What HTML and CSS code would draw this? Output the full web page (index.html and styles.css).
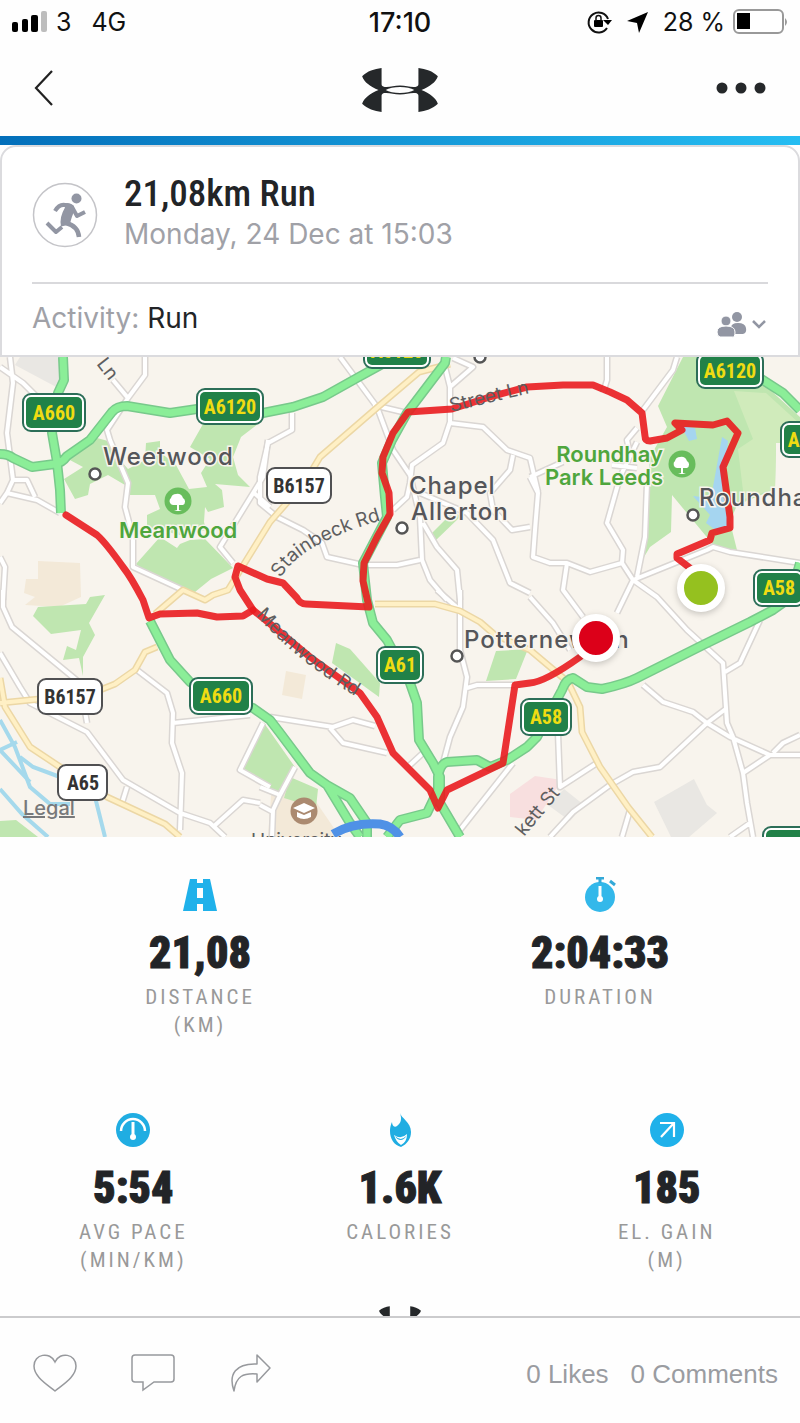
FILE: index.html
```html
<!DOCTYPE html>
<html lang="en">
<head>
<meta charset="utf-8">
<meta name="viewport" content="width=device-width, initial-scale=1">
<title>21,08km Run</title>
<link rel="stylesheet" href="styles.css">
</head>
<body>
<svg class="defs" aria-hidden="true">
  <symbol id="logo" viewBox="0 0 74 43">
    <path d="M19 0C12 1 5 3 0 8C2 14 8 18 16 21.500C8 25 2 29 0 35C5 40 12 42 19 43V27Q19 25 22 24.500C27 24 31 26 37 26C43 26 47 24 52 24.500Q55 25 55 27V43C62 42 69 40 74 35C72 29 66 25 58 21.500C66 18 72 14 74 8C69 3 62 1 55 0V16Q55 18 52 18.500C47 19 43 17 37 17C31 17 27 19 22 18.500Q19 18 19 16ZM23 21.500C29 17.500 45 17.500 51 21.500C45 25.500 29 25.500 23 21.500Z" fill="#25282a" fill-rule="evenodd"/>
  </symbol>
</svg>
<div class="app">
  <div class="status">
    <div class="status-side">
      <svg width="36" height="24" viewBox="0 0 36 24" aria-hidden="true"><rect y="12" width="6" height="10" rx="2"/><rect x="10" y="9" width="6" height="13" rx="2"/><rect x="19" y="5" width="7" height="17" rx="2"/><rect x="29" y="1" width="6" height="21" rx="2" fill="#bdbdbd"/></svg>
      <span>3</span><span class="network">4G</span>
    </div>
    <span class="clock">17:10</span>
    <div class="status-side status-right">
      <svg width="26" height="24" viewBox="0 0 26 24" aria-hidden="true"><path d="M20 18A10 10 0 1 1 21 9" fill="none" stroke="#111" stroke-width="2"/><path d="M16 10h9l-4 5z"/><rect x="7" y="10" width="9" height="7" rx="1"/><path d="M9 11V8a2.500 2.500 0 0 1 5 0v3" fill="none" stroke="#111" stroke-width="1.500"/></svg>
      <svg class="locate" width="22" height="22" viewBox="0 0 22 22" aria-hidden="true"><path d="M21 1L0 10l10 2 2 10z"/></svg>
      <span>28 %</span>
      <svg width="55" height="26" viewBox="0 0 55 26" aria-hidden="true"><rect x="1" y="1" width="49" height="23" rx="5" fill="#fff" stroke="#999" stroke-width="2"/><rect x="4" y="4" width="13" height="16"/><path d="M52 9q4 4 0 8z" fill="#999"/></svg>
    </div>
  </div>
  <header class="nav">
    <button class="icon-btn" aria-label="Back"><svg width="20" height="38" viewBox="0 0 20 38"><path d="M18 2L2 19l16 17" fill="none" stroke="#222" stroke-width="2.200"/></svg></button>
    <svg class="brand" role="img" aria-label="Under Armour"><use href="#logo"/></svg>
    <button class="icon-btn" aria-label="More"><svg width="50" height="12" viewBox="0 0 50 12" fill="#25282a"><circle cx="6" cy="6" r="5.500"/><circle cx="25" cy="6" r="5.500"/><circle cx="44" cy="6" r="5.500"/></svg></button>
  </header>
  <div class="accent"></div>
  <main class="content">
    <section class="card">
      <div class="summary">
        <svg class="avatar" width="66" height="66" viewBox="0 0 66 66" aria-hidden="true"><circle cx="33" cy="33" r="31.500" fill="#fff" stroke="#c4c4c8" stroke-width="1.500"/><circle cx="44.500" cy="16.500" r="5" fill="#9296a3"/><g fill="none" stroke="#9296a3" stroke-width="4" stroke-linejoin="round"><path d="M23 29q4-7 10-6l7 2 5 9 8-4"/><path d="M34 41q12 3 13 14" stroke-width="4.500"/><path d="M15 41l9 9 6-5"/></g><path d="M31 21.500q8-2 11 3c1 6-3 10-4 18l-9 2q-2-9 4-19z" fill="#9296a3"/></svg>
        <div><h1>21,08km Run</h1><p class="date">Monday, 24 Dec at 15:03</p></div>
      </div>
      <div class="activity">
        <p><span class="muted">Activity:</span> Run</p>
        <button class="icon-btn" aria-label="Privacy"><svg width="51" height="28" viewBox="0 0 51 28"><g fill="#9296a3"><circle cx="20" cy="7" r="5"/><path d="M14 18q0-5 7-5t8 5-3 6H17q-3-2-3-6z"/><circle cx="9" cy="11" r="5" stroke="#fff"/><path d="M0 22q0-6 9-6t9 6-3 5H3q-3-1-3-5z" stroke="#fff"/></g><path d="M36 11l6 6 6-6" fill="none" stroke="#9296a3" stroke-width="2.500"/></svg></button>
      </div>
    </section>
    <svg class="map" viewBox="0 0 800 480" role="img" aria-label="Route map">
      <rect width="800" height="480" fill="#f8f4ed"/>
      <g fill="#e9e7e3"><path d="M15 8l45 24V0H20z"/><path d="M654 445l40-23 13 26 10 8-28 24h-18z"/><path d="M548 448l16-16 20 16-14 16z"/></g>
      <g fill="#f3e9d8"><path d="M38 204l42 2 1 34-22 10-34-2 10-8-11-4 2-14h12z"/><path d="M286 314l20 4-4 24-20-4z"/><path d="M272 426l38 10 30 44h-72z"/></g>
      <path d="M510 437l25-18 27 4-26 40-26-3z" fill="#f8dfdf"/>
      <g fill="#bfe6b0">
        <path d="M97 81L108 84L113 95L128 112L145 103L146 86L160 84L160 95L176 108L189 132L207 130L201 116L210 102L190 90L203 67L235 66L263 63L241 80L233 100L238 118L250 130L215 127L222 133L224 150L208 155L205 150L204 165L206 173L180 178L160 173L147 170L147 158L160 152L155 138L130 138L125 128L108 118L90 127L88 138L75 142L64 122L83 110L68 102Z"/>
        <path d="M160 180L177 191L180 187L190 183L205 182L233 211L211 222L195 235L160 226L136 207Z"/>
        <path d="M38 250L86 247L90 240L105 238L89 266L95 278L83 300L83 319L79 301L63 303L67 289L76 293L81 273L51 277L33 259Z"/>
        <path d="M336 286l14 6 30 34-1 14-47-34z"/>
        <path d="M430 178L453 155L461 159L434 185Z"/>
        <path d="M486 324l10-30 32-2-12 30z"/>
        <path d="M683 0H733L745 10L800 60V85L776 86L775 132L737 148L730 165L737 193L715 190L672 138L671 175L650 190L638 210L645 160L650 100L667 70L658 49Z"/>
        <path d="M264 366L297 413L280 438L242 413ZM290 420L318 432L316 451L284 441Z"/>
        <path d="M0 464l16-1 22 17H0z"/>
      </g>
      <path d="M734 34l32 2 34 31v18l-24 1-1 46-31 10-6-50 15-10z" fill="#d0ebbb"/>
      <g fill="#a5d5f0"><path d="M681 69l14 2 2 11-8 2z"/><path d="M722 80l6 4-6 52 8 36-12 3-12-9 4-8-17-19 18 2z"/></g>
      <g class="stream"><path d="M0 363L15 390L30 430L50 447L70 447M20 400L33 410L60 420M95 440L105 480"/><path d="M0 393l17-8M0 393L30 425"/><path d="M0 432l22 25 26 23"/></g>
      <g class="road-case">
        <path id="m1" d="M10 0L13 26L7 76L13 123L7 136L0 146M0 10L23 26L43 46M13 123H27L35 140M7 136L37 143L60 156M145 0V18L128 41L107 73L110 83L128 126L125 150L133 180V210L183 233M128 41L113 23M268 83L263 120L220 190L233 206M253 135L270 150M0 200L5 210L3 243"/>
        <path id="m2" d="M3 233V250L12 270L80 326L87 366M0 296L20 330L30 346L87 375L123 423L180 456L210 466L225 480M127 430L122 446M137 313L167 336L173 356L172 386L182 416L180 473M173 366L250 358M263 366L240 413L270 430M213 470L243 443L260 446"/>
        <path id="m3" d="M340 0L377 50L393 93L410 118M373 48L407 56M292 56V73L268 86L260 120V146L277 160L303 173L322 186L327 200L363 208H397L420 203M445 10L450 30V65L443 86L412 108L410 126L407 140L393 153M450 30L473 10L453 1M450 66L483 70L507 93L530 101L538 135M513 98L510 113L490 136L493 153L512 173L530 170M410 118L420 160L422 203L430 223L447 243M420 136L467 156L493 183L510 226L530 236M423 166L437 190L457 213L460 243"/>
        <path id="m4" d="M460 233V293L467 320L463 350L450 380L443 406M467 331L477 328H515M437 233L460 253M270 360L333 370L353 363L375 369M330 371L343 386L387 396M410 408L423 396M460 473L513 406M260 430L280 438L295 410M280 438L273 453L272 480M260 448L273 455"/>
        <path id="m5" d="M607 0V23L603 36M677 0L673 13L643 53M637 71L627 83L630 98M530 120L563 105M612 108L637 111M647 126L645 180L637 220M637 85L620 120L607 166L623 193L622 206L633 223M530 120L538 136L535 173L533 200L550 206H567L590 215L622 206M567 206L563 233L583 260M633 223L707 193L713 190L730 195L800 206M633 223L617 256M633 223L657 240L687 273L723 306L727 366L733 380L743 416L747 446L753 480M760 263L740 306L725 315M643 328L663 345L693 355L707 366L730 380L770 398H800M727 351L707 366L660 410L633 415L610 428L573 455L550 480M773 396L783 386L800 378M770 398L743 416M558 376L560 430L597 406M630 453L622 480M730 480L750 466M530 240L553 266L570 293"/>
      </g>
      <g class="road"><use href="#m1"/><use href="#m2"/><use href="#m3"/><use href="#m4"/><use href="#m5"/></g>
      <g class="yellow"><path id="y1" d="M450 7L419 15L379 49L320 100L305 125L270 165L228 233L213 238L205 243L183 233L155 257M157 290L145 295L135 313L115 327L90 337L0 346M0 321L5 350L30 390L57 408L107 440L165 467L180 480M375 247H435L460 254L480 265L495 278L530 293L568 325L580 350L582 375L600 410L628 450L652 480"/></g>
      <g class="yellow-in"><use href="#y1"/></g>
      <g class="green-case">
        <path id="g1" d="M63 0L64 23L58 36L52 76L57 105L60 133L61 156M0 97Q8 97 13 101L32 110L55 107Q62 106 67 99L90 83L112 55Q117 49 127 49L170 56L197 52L263 56L293 50L323 40L357 21L395 0"/>
        <path id="g2" d="M446 0L445 6L407 56L392 83L382 106L385 140L387 160L363 206L367 243L373 266L387 283L410 326L417 346L419 383L433 406L440 420V446L460 480"/>
        <path id="g3" d="M800 206L790 241L773 253L750 265L703 288L637 321Q625 327 602 332L587 330L573 321Q566 322 562 333L537 380L527 390L507 403L490 410L477 403L447 405Q440 407 438 420V433L427 456L400 463L387 480"/>
        <path id="g4" d="M150 264L170 303L190 325L220 340L253 351L270 363L280 376L310 416L327 428L350 466L360 480M327 428L350 441L367 466V480"/>
        <path id="g5" d="M755 18L783 36L800 53"/>
      </g>
      <g class="green"><use href="#g1"/><use href="#g2"/><use href="#g3"/><use href="#g4"/><use href="#g5"/></g>
      <path d="M333 477q20-12 47-10 13 2 20 13" fill="none" stroke="#4f91e6" stroke-width="9"/>
      <path class="route" d="M66 158L97 178Q106 186 123 210Q131 220 143 243L149 261L160 257L197 256L217 260L243 259L253 253L240 233L235 220L238 209L267 222L283 226L297 241Q300 247 306 247L369 250L363 224L364 206L377 180L390 157L389 136L382 116L383 100L393 76L408 55L452 52L493 39L527 30L563 28H593L610 35L627 43L642 56L645 79Q645 84 650 84L667 81L682 73L675 66L713 68L727 64L738 76L723 110L730 160V171L712 176L710 183L677 197V201L690 211"/>
      <path class="route" d="M253 253L263 261L310 300L360 336L377 360L393 396L430 433L438 451L447 433L503 406L515 328L530 326Q545 325 580 300"/>
      <g class="place">
        <text x="103" y="108">Weetwood</text><text x="409" y="137">Chapel</text><text x="411" y="163">Allerton</text><text x="699" y="149">Roundhay</text><text x="464" y="291">Potternewton</text>
      </g>
      <g class="park"><text x="119" y="181">Meanwood</text><text x="663" y="105" text-anchor="end">Roundhay</text><text x="663" y="128" text-anchor="end">Park Leeds</text></g>
      <g fill="#fff" stroke="#555" stroke-width="2.500"><circle cx="95" cy="117" r="5.500"/><circle cx="402" cy="171" r="5.500"/><circle cx="693" cy="158" r="5.500"/><circle cx="457" cy="299" r="5.500"/><circle cx="480" cy="0" r="5.500"/></g>
      <g id="tree"><circle cx="178" cy="144" r="13.500" fill="#68bd5c"/><path d="M177 153v-5h-4a4 4 0 0 1-2-7q1-4 5-4 5-1 7 4a4 4 0 0 1 0 7h-4v5l3 1h-8z" fill="#fff"/></g>
      <use href="#tree" x="504" y="-37"/>
      <g><circle cx="304" cy="454" r="13.500" fill="#ab8a70"/><path d="M293 451l11-5 11 5-11 5zM297 455l7 3 7-3v5q-7 4-14 0z" fill="#fff"/></g>
      <path id="p-stain" d="M281 221Q300 184 400 158" fill="none"/><path id="p-mean" d="M256 258Q300 309 374 350" fill="none"/><path id="p-street" d="M451 55L560 29" fill="none"/>
      <g class="street"><text><textPath href="#p-stain">Stainbeck Rd</textPath></text><text><textPath href="#p-mean">Meanwood Rd</textPath></text><text><textPath href="#p-street">Street Ln</textPath></text><text transform="translate(96 7) rotate(52)">Ln</text><text transform="translate(524 480) rotate(-50)">kett St</text><text x="251" y="490">University</text></g>
      <text class="legal" x="23" y="458">Legal</text>
      <g class="shield">
        <g transform="translate(23 37)"><rect width="62" height="37" rx="8"/><rect class="in" x="3" y="3" width="56" height="31" rx="5"/><text x="31" y="26">A660</text></g>
        <g transform="translate(197 32)"><rect width="66" height="35" rx="8"/><rect class="in" x="3" y="3" width="60" height="29" rx="5"/><text x="33" y="25">A6120</text></g>
        <g transform="translate(364 -24)"><rect width="66" height="35" rx="8"/><rect class="in" x="3" y="3" width="60" height="29" rx="5"/><text x="33" y="25">A6120</text></g>
        <g transform="translate(697 -4)"><rect width="66" height="35" rx="8"/><rect class="in" x="3" y="3" width="60" height="29" rx="5"/><text x="33" y="25">A6120</text></g>
        <g transform="translate(781 65)"><rect width="66" height="35" rx="8"/><rect class="in" x="3" y="3" width="60" height="29" rx="5"/><text x="33" y="25">A6120</text></g>
        <g transform="translate(377 290)"><rect width="46" height="36" rx="8"/><rect class="in" x="3" y="3" width="40" height="30" rx="5"/><text x="23" y="25">A61</text></g>
        <g transform="translate(190 321)"><rect width="62" height="36" rx="8"/><rect class="in" x="3" y="3" width="56" height="30" rx="5"/><text x="31" y="25">A660</text></g>
        <g transform="translate(521 342)"><rect width="50" height="36" rx="8"/><rect class="in" x="3" y="3" width="44" height="30" rx="5"/><text x="25" y="25">A58</text></g>
        <g transform="translate(754 213)"><rect width="50" height="36" rx="8"/><rect class="in" x="3" y="3" width="44" height="30" rx="5"/><text x="25" y="25">A58</text></g>
        <g transform="translate(763 470)"><rect width="66" height="36" rx="8"/><rect class="in" x="3" y="3" width="60" height="30" rx="5"/></g>
      </g>
      <g class="plate">
        <g transform="translate(267 111)"><rect width="64" height="35" rx="8"/><text x="32" y="25">B6157</text></g>
        <g transform="translate(38 322)"><rect width="64" height="35" rx="8"/><text x="32" y="25">B6157</text></g>
        <g transform="translate(58 408)"><rect width="49" height="35" rx="8"/><text x="25" y="25">A65</text></g>
      </g>
      <g class="pin"><circle cx="701" cy="231" r="20.500" fill="#95c11f"/><circle cx="596" cy="281" r="20.500" fill="#dc0019"/></g>
    </svg>
    <section class="stats stats-two">
      <div class="stat"><svg width="34" height="32" viewBox="0 0 34 32" aria-hidden="true"><path d="M7 0h7v4h6V0h7l7 32H20v-7h-6v7H0zM14 9v10h6V9z" fill="#1fb1ea" fill-rule="evenodd"/></svg><strong>21,08</strong><span>DISTANCE<br>(KM)</span></div>
      <div class="stat"><svg width="34" height="36" viewBox="0 0 34 36" aria-hidden="true"><circle cx="17" cy="20" r="15" fill="#33b8ea"/><path d="M13 1h8M17 1v5M27 4l5 4" fill="none" stroke="#33a9d8" stroke-width="3"/><path d="M17 9v14" stroke="#fff" stroke-width="3"/><circle cx="17" cy="22" r="3" fill="#fff"/></svg><strong>2:04:33</strong><span>DURATION</span></div>
    </section>
    <section class="stats stats-three">
      <div class="stat"><svg width="34" height="34" viewBox="0 0 34 34" aria-hidden="true"><circle cx="17" cy="17" r="17" fill="#20ade2"/><path d="M5 18a12 12 0 0 1 24 0" fill="none" stroke="#fff" stroke-width="2.500"/><path d="M17 9v15" stroke="#fff" stroke-width="3"/><circle cx="17" cy="24" r="3" fill="#fff"/></svg><strong>5:54</strong><span>AVG PACE<br>(MIN/KM)</span></div>
      <div class="stat"><svg width="34" height="34" viewBox="0 0 34 34" aria-hidden="true"><path d="M17 0c1 5 11 9 11 19 0 7-4 12-10 15C11 32 7 26 7 18c0-5 2-9 2-9 0 4 3 6 5 4 4-3 5-7 3-13z" fill="#20ade2"/><path d="M11 22q7 5 13-1 0 8-6 11-5-3-7-10z" fill="#fff"/><path d="M12 23q6 6 11 0-1 3-5 4-4 0-6-4z" fill="#20ade2"/></svg><strong>1.6K</strong><span>CALORIES</span></div>
      <div class="stat"><svg width="34" height="34" viewBox="0 0 34 34" aria-hidden="true"><circle cx="17" cy="17" r="17" fill="#1fb1ea"/><path d="M10 10h14v14M24 10L11 24" fill="none" stroke="#fff" stroke-width="2.200"/></svg><strong>185</strong><span>EL. GAIN<br>(M)</span></div>
    </section>
    <svg class="brand-small" aria-hidden="true"><use href="#logo"/></svg>
  </main>
  <footer class="actions">
    <button class="icon-btn" aria-label="Like"><svg width="44" height="38" viewBox="0 0 44 38"><path d="M22 37C12 29 1 22 1 12 1 0 17-3 22 8 27-3 43 0 43 12c0 10-11 17-21 25z" fill="none" stroke="#97999d" stroke-width="1.500"/></svg></button>
    <button class="icon-btn" aria-label="Comment"><svg width="44" height="38" viewBox="0 0 44 38"><path d="M4 1h36q3 0 3 3v21q0 3-3 3H23L12 36v-8H4q-3 0-3-3V4q0-3 3-3z" fill="none" stroke="#97999d" stroke-width="1.500"/></svg></button>
    <button class="icon-btn" aria-label="Share"><svg width="42" height="38" viewBox="0 0 42 38"><path d="M28 1l13 13-13 14v-8C14 19 7 22 5 37-1 20 7 9 28 10z" fill="none" stroke="#97999d" stroke-width="1.500" stroke-linejoin="round"/></svg></button>
    <p class="counts"><a href="#likes">0 Likes</a><a href="#comments">0 Comments</a></p>
  </footer>
</div>
</body>
</html>
```
FILE: styles.css
```css
* { box-sizing: border-box; }
body { margin: 0; background: #fefefe; color: #222427; font-family: Inter, "Liberation Sans", sans-serif; }
h1, p { margin: 0; }
svg { display: block; flex: none; }
.defs { position: absolute; width: 0; height: 0; }
.icon-btn { padding: 0; border: 0; background: none; cursor: pointer; }
.app { display: flex; flex-direction: column; height: 100vh; }
.status { display: grid; grid-template-columns: 1fr auto 1fr; align-items: center; height: 44px; padding: 0 12px; font-size: 25px; color: #111; }
.status-side { display: flex; align-items: center; gap: 8px; }
.status-right { justify-content: flex-end; }
.network { margin-left: 12px; }
.locate { margin: 0 6px; }
.clock { font-size: 27px; font-weight: 500; }
.nav { display: grid; grid-template-columns: 1fr auto 1fr; align-items: center; height: 92px; padding: 0 34px; }
.nav .icon-btn { justify-self: start; margin-bottom: 4px; }
.nav .icon-btn:last-child { justify-self: end; }
.brand { width: 76px; height: 44px; }
.accent { flex: none; height: 9px; background: linear-gradient(90deg, #036fba, #25bdf2); }
.content { flex: 1; min-height: 0; overflow: hidden auto; scrollbar-width: none; }
.card { border: 2px solid #dbdbde; border-radius: 16px 16px 0 0; padding: 0 30px; background: #fff; }
.summary { display: flex; align-items: center; gap: 26px; height: 137px; border-bottom: 2px solid #d9d9dc; }
h1 { font: 500 37px/40px "Roboto Condensed", "Liberation Sans Narrow", Roboto, sans-serif; }
.date { padding-bottom: 2px; font-size: 28px; line-height: 40px; color: #a0a1a7; }
.activity { display: flex; justify-content: space-between; align-items: center; height: 71px; font-size: 28px; }
.activity p { padding-bottom: 4px; }
.activity .icon-btn { padding-top: 8px; }
.muted { color: #a0a1a7; }
.map { width: 100%; height: auto; overflow: hidden; }
.stream { fill: none; stroke: #a5d9ec; stroke-width: 4; }
.road-case { fill: none; stroke: #dad6d3; stroke-width: 7; stroke-linejoin: round; }
.road { fill: none; stroke: #fff; stroke-width: 4; stroke-linejoin: round; }
.yellow { fill: none; stroke: #ecd7a5; stroke-width: 7; stroke-linejoin: round; }
.yellow-in { fill: none; stroke: #fff0c5; stroke-width: 4; stroke-linejoin: round; }
.green-case { fill: none; stroke: #78c98b; stroke-width: 10; stroke-linejoin: round; }
.green { fill: none; stroke: #8bee98; stroke-width: 7; stroke-linejoin: round; }
.route { fill: none; stroke: #e91c1f; stroke-opacity: .9; stroke-width: 7; stroke-linejoin: round; stroke-linecap: round; }
.place, .park, .street { paint-order: stroke; stroke: #f8f4ed; stroke-width: 3; }
.place { font-size: 24px; font-weight: 500; letter-spacing: 1px; fill: #55565a; }
.park { font-size: 22px; font-weight: 600; fill: #4fa63d; }
.street { font-size: 19px; fill: #5e5e60; stroke: none; }
.legal { font-size: 20px; font-weight: 500; fill: #77787a; text-decoration: underline; }
.shield, .plate { font: 700 20px "Roboto Condensed", "Liberation Sans Narrow", Roboto, sans-serif; text-anchor: middle; }
.shield rect { fill: #fff; stroke: #2c6e58; stroke-width: 2; }
.shield .in { fill: #218148; stroke: none; }
.shield text { fill: #f0dc12; }
.plate rect { fill: #fff; stroke: #505052; stroke-width: 2; }
.plate text { fill: #333; }
.pin { stroke: #fff; stroke-width: 7; filter: drop-shadow(0 2px 3px #0003); }
.stats { display: grid; text-align: center; }
.stats-two { grid-template-columns: 1fr 1fr; padding-top: 40px; min-height: 235px; }
.stats-three { grid-template-columns: repeat(3, 1fr); padding-top: 40px; }
.stat { display: flex; flex-direction: column; align-items: center; }
.stat svg { height: 36px; }
.stat strong { margin-top: 12px; font: 900 44px/56px "Roboto Condensed", "Liberation Sans Narrow", Roboto, sans-serif; -webkit-text-stroke: 1px currentColor; }
.stat span { margin-top: 2px; font: 400 21px/28px "Roboto Condensed", "Liberation Sans Narrow", Roboto, sans-serif; letter-spacing: 3px; color: #999; }
.brand-small { width: 42px; height: 25px; margin: 32px auto; }
.actions { display: flex; align-items: center; gap: 54px; flex: none; height: 107px; padding: 4px 22px 0 33px; border-top: 2px solid #cbcbcd; background: #fefefe; }
.counts { display: flex; gap: 22px; margin-left: auto; padding-top: 4px; font-size: 26px; }
.counts a { color: #9a9ca1; text-decoration: none; font-family: "Liberation Sans", sans-serif; }
```
